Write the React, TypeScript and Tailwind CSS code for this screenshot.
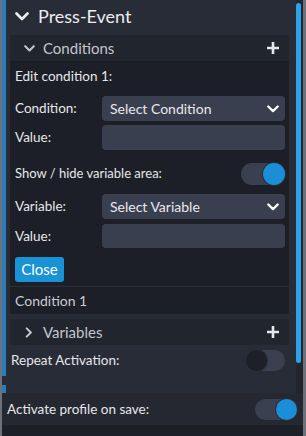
import React from 'react'

function ChevronDown({ className }: { className?: string }) {
  return (
    <svg viewBox="0 0 14 9" className={className} fill="none" stroke="currentColor" strokeWidth={2.6} strokeLinecap="round" strokeLinejoin="round">
      <path d="M1.5 1.5 L7 7 L12.5 1.5" />
    </svg>
  )
}

function ChevronRight({ className }: { className?: string }) {
  return (
    <svg viewBox="0 0 8 12" className={className} fill="none" stroke="currentColor" strokeWidth={2.2} strokeLinecap="round" strokeLinejoin="round">
      <path d="M1.5 1.5 L6 6 L1.5 10.5" />
    </svg>
  )
}

function Plus() {
  return (
    <svg viewBox="0 0 12 12" className="w-[12px] h-[12px] text-[#e6e7ea]" fill="none" stroke="currentColor" strokeWidth={2.6}>
      <path d="M6 0 V12 M0 6 H12" />
    </svg>
  )
}

function Toggle({ on, className }: { on: boolean; className: string }) {
  return (
    <div className={`rounded-full bg-[#3b4050] flex items-center ${on ? 'justify-end' : 'justify-start'} ${className}`}>
      <span className={`h-full aspect-square rounded-full ${on ? 'bg-[#1a8fd8]' : 'bg-[#1d2027]'} ring-1 ring-[#2a2e38]`} />
    </div>
  )
}

function Select({ label }: { label: string }) {
  return (
    <div className="flex-1 h-[25px] rounded-[4px] bg-[#3a3f4f] flex items-center justify-between pl-[8px] pr-[6px] text-[14px] text-[#e8e9ec]">
      <span>{label}</span>
      <ChevronDown className="w-[12px] h-[8px] text-white" />
    </div>
  )
}

function Row({ label, children, className }: { label: string; children: React.ReactNode; className?: string }) {
  return (
    <div className={`flex items-center ${className ?? ''}`}>
      <span className="w-[87px] text-[13.5px] text-[#e6e7ea]">{label}</span>
      {children}
    </div>
  )
}

export default function App() {
  return (
    <div className="w-[306px] h-[436px] bg-[#1d2027] border-l-2 border-r-[3px] border-[#6d717a] flex flex-col font-['Lato',sans-serif] overflow-hidden">
      <div className="h-[393px] flex bg-[#282c37] shrink-0">
        <div className="flex-1 flex flex-col">
          <div className="border-l-4 border-[#2a7cba] flex flex-col">
            <div className="h-[32px] flex items-center pl-[9px] gap-[9px] text-[#ecedf0]">
              <ChevronDown className="w-[14px] h-[9px]" />
              <span className="text-[18px]">Press-Event</span>
            </div>
            <div className="mt-[3px] ml-[4px] mr-[7px] rounded-[2px] bg-[#1c1f27] flex flex-col">
              <div className="h-[27px] bg-[#21252e] border-b border-[#171a20] flex items-center pl-[14px] pr-[10px] text-[#c3c6cc]">
                <ChevronDown className="w-[11px] h-[7px]" />
                <span className="ml-[8px] text-[15px] flex-1">Conditions</span>
                <Plus />
              </div>
              <div className="pl-[5px] pr-[4px] pt-[4px] flex flex-col">
                <div className="h-[20px] leading-[20px] text-[13.5px] text-[#e6e7ea]">Edit condition 1:</div>
                <Row label="Condition:" className="mt-[10px]">
                  <Select label="Select Condition" />
                </Row>
                <Row label="Value:" className="mt-[4px]">
                  <div className="flex-1 h-[25px] rounded-[4px] bg-[#3a3f4f]" />
                </Row>
                <div className="mt-[13px] h-[22px] flex items-center justify-between">
                  <span className="text-[13px] text-[#e6e7ea]">Show / hide variable area:</span>
                  <Toggle on className="w-[44px] h-[22px]" />
                </div>
                <Row label="Variable:" className="mt-[9px]">
                  <Select label="Select Variable" />
                </Row>
                <Row label="Value:" className="mt-[5px]">
                  <div className="flex-1 h-[24px] rounded-[4px] bg-[#3a3f4f]" />
                </Row>
                <div className="mt-[9px]">
                  <button className="w-[49px] h-[25px] rounded-[3px] bg-[#1a92d6] text-white text-[15px]">Close</button>
                </div>
              </div>
              <div className="mt-[4px] border-t border-[#2b2f39] h-[28px] flex items-center pl-[5px] text-[14px] text-[#c9ccd2]">
                Condition 1
              </div>
            </div>
            <div className="mt-[5px] ml-[4px] mr-[7px] h-[26px] rounded-[2px] bg-[#21252e] flex items-center pl-[15px] pr-[10px] text-[#c3c6cc]">
              <ChevronRight className="w-[8px] h-[11px]" />
              <span className="ml-[10px] text-[15px] flex-1">Variables</span>
              <Plus />
            </div>
            <div className="h-[31px] flex items-center justify-between pl-[5px] pr-[11px]">
              <span className="text-[13.5px] text-[#e6e7ea]">Repeat Activation:</span>
              <Toggle on={false} className="w-[39px] h-[21px]" />
            </div>
          </div>
          <div className="mt-[9px] flex-1 border-l-4 border-[#2a7cba]" />
        </div>
        <div className="w-[7px] bg-[#22252d] pt-[3px]">
          <div className="w-[5px] h-[360px] rounded-full bg-[#2ba2ea]" />
        </div>
      </div>
      <div className="h-[32px] shrink-0 bg-[#252831] flex items-center justify-between pl-[5px] pr-[6px]">
        <span className="text-[13.5px] text-[#e6e7ea]">Activate profile on save:</span>
        <Toggle on className="w-[42px] h-[21px]" />
      </div>
    </div>
  )
}
